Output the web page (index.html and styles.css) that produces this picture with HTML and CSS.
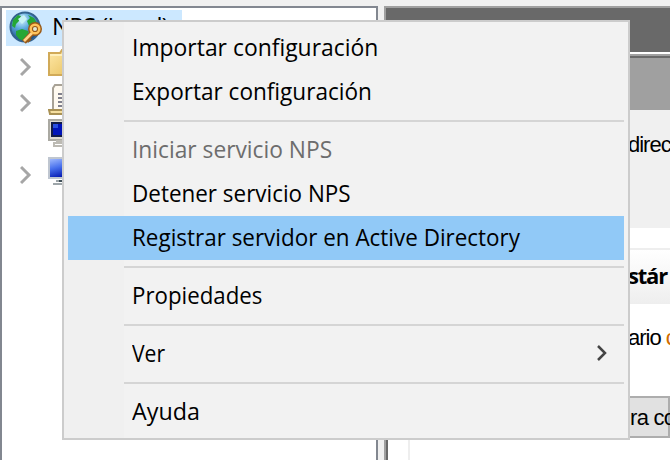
FILE: index.html
```html
<!DOCTYPE html>
<html lang="es">
<head>
<meta charset="utf-8">
<title>NPS</title>
<link rel="stylesheet" href="styles.css">
</head>
<body>
<main class="window">
  <aside class="tree">
    <div class="row selected">
      <svg class="globe" width="34" height="34" viewBox="0 0 34 34">
        <defs><radialGradient id="sea" cx=".38" cy=".25" r=".8"><stop offset="0" stop-color="#d9f5ff"/><stop offset=".4" stop-color="#5aa8dc"/><stop offset="1" stop-color="#164078"/></radialGradient></defs>
        <circle cx="16" cy="16" r="14.5" fill="url(#sea)" stroke="#33628f" stroke-width="2"/>
        <path d="M3 15L4 9l5-5 3 1-2 5-3 3-1 4zM19 4l6 3 4 7-2 3-4-3-3 1-2-5 3-3zM7 20l6-2 6 2 1 4-5 6-5-2-3-4z" fill="#25a735"/>
        <path d="M9 8l6-4 3 4-5 5z" fill="#c8f2f4"/>
        <path d="M15 31L24 21M18 27l3 3" stroke="#9a5a18" stroke-width="5"/>
        <circle cx="26" cy="18" r="4.5" fill="#dfe9d8" stroke="#9a5a18" stroke-width="5"/>
        <path d="M15 30L24 21" stroke="#ffd38b" stroke-width="2.6"/>
        <circle cx="26" cy="18" r="4.3" fill="none" stroke="#ffc35b" stroke-width="2.4"/>
      </svg>
      <span class="tree-label">NPS (Local)</span>
    </div>
    <div class="row">
      <svg class="chevron" width="12" height="20" viewBox="0 0 12 20"><path d="M1 2l8 8-8 8"/></svg>
      <svg width="32" height="32" viewBox="0 0 32 32"><defs><linearGradient id="fold" x2="1" y2="1"><stop stop-color="#ffe9a8"/><stop offset="1" stop-color="#e5bd58"/></linearGradient></defs><path d="M1 6V5h11l2-3h16v25H1z" fill="url(#fold)" stroke="#d1aa58" stroke-width="2"/><path d="M2 7h12" stroke="#fff0bd" stroke-width="2"/></svg>
    </div>
    <div class="row">
      <svg class="chevron" width="12" height="20" viewBox="0 0 12 20"><path d="M1 2l8 8-8 8"/></svg>
      <svg width="32" height="32" viewBox="0 0 32 32"><path d="M5 26V4l2-3h20v25z" fill="#fffaf0" stroke="#a8a296" stroke-width="2"/><path d="M1 26h25v4H2z" fill="#f5dfa0" stroke="#a99154" stroke-width="2"/><path d="M10 10h9M10 14h9M10 18h9M10 22h9" stroke="#80808c" stroke-width="2"/></svg>
    </div>
    <div class="row computer">
      <span class="chevron"></span>
      <svg width="32" height="32" viewBox="0 0 32 32"><path d="M1 3h29v20H1z" fill="#dedbd2" stroke="#aaa9a2" stroke-width="2"/><path d="M4 6h23v13H4z" fill="#0013b8" stroke="#111b48" stroke-width="2"/><path d="M5 7h5v4H5z" fill="#294ee0"/><path d="M8 24h15v2H6v3h20" fill="none" stroke="#bcbab3" stroke-width="2"/></svg>
    </div>
    <div class="row">
      <svg class="chevron" width="12" height="20" viewBox="0 0 12 20"><path d="M1 2l8 8-8 8"/></svg>
      <svg width="32" height="32" viewBox="0 0 32 32"><defs><linearGradient id="screen" x2=".4" y2="1"><stop stop-color="#a9c1ff"/><stop offset=".5" stop-color="#4870ed"/><stop offset="1" stop-color="#0013ad"/></linearGradient></defs><path d="M1 2h29v20H1z" fill="url(#screen)" stroke="#bfc6d0" stroke-width="2"/><path d="M8 25h10M5 28h20" stroke="#9da5a9" stroke-width="2"/><path d="M11 24h9v2h-9z" fill="#405058"/></svg>
    </div>
  </aside>
  <section class="details">
    <div class="title-band"></div>
    <div class="sub-band"></div>
    <div class="intro"><span class="snip direc">direc</span></div>
    <div class="card">
      <div class="card-head"><span class="snip stan">stár</span></div>
      <div class="card-body"><span class="snip ario">ario <span class="orange">c</span></span></div>
      <div class="button"><span class="snip">ra co</span></div>
    </div>
  </section>
</main>
<nav class="menu">
  <div class="item"><span class="t1">Importar configuración</span></div>
  <div class="item"><span class="t2">Exportar configuración</span></div>
  <hr>
  <div class="item disabled"><span class="t3">Iniciar servicio NPS</span></div>
  <div class="item"><span class="t4">Detener servicio NPS</span></div>
  <div class="item active"><span class="t5">Registrar servidor en Active Directory</span></div>
  <hr>
  <div class="item"><span class="t6">Propiedades</span></div>
  <hr>
  <div class="item"><span class="t7">Ver</span><svg class="arrow" width="12" height="16" viewBox="0 0 12 16"><path d="M2 1l7 7-7 7"/></svg></div>
  <hr>
  <div class="item"><span class="t8">Ayuda</span></div>
</nav>
</body>
</html>
```

FILE: styles.css
```css
* { box-sizing: border-box; }
body { margin: 0; width: 670px; height: 460px; overflow: hidden; background: #f0f0f0; font-family: "Open Sans", "Noto Sans", sans-serif; color: #000; }
.window { display: flex; gap: 6px; height: 470px; padding-top: 6px; }
.tree { width: 378px; flex: none; border: 2px solid #828790; background: #fff; padding: 2px 4px; }
.row { display: flex; align-items: center; height: 36px; padding-left: 14px; }
.row > svg:last-child { margin-left: 16px; }
.row > .chevron { width: 12px; flex: none; margin-top: 6px; }
.row > span.chevron + svg { margin-left: 16px; }
.computer { padding-bottom: 6px; }
.chevron path { fill: none; stroke: #a6a6a6; stroke-width: 3; }
.selected { width: 176px; padding-left: 3px; background: #cce8ff; }
.tree-label { margin-left: 9px; font-size: 24px; line-height: 32px; height: 36px; white-space: nowrap; letter-spacing: -0.7px; }
.details { flex: 1; border: solid #a0a0a0; border-width: 2px 0 0 2px; overflow: hidden; }
.title-band { height: 44px; background: #696969; }
.sub-band { height: 58px; border-top: 2px solid #fff; background: linear-gradient(#a0a0a0 2px, #696969 2px 4px, #a0a0a0 4px); }
.intro { height: 118px; background: #f0f0f0; padding: 20px 0 0 241px; }
.title-band, .sub-band, .intro { border-left: 2px solid #696969; }
.intro { padding-left: 240px; }
.card { height: 240px; border-left: 2px solid #696969; background: linear-gradient(90deg, #fff 20px, #eee 20px 22px, #fff 22px); padding: 20px 0 0 20px; }
.card-head { height: 56px; border-top: 2px solid #eee; background: linear-gradient(#fff, #eee); padding: 10px 0 0 220px; }
.card-body { height: 92px; padding: 19px 0 0 220px; }
.button { height: 42px; border: 2px solid #adadad; background: #e1e1e1; padding: 5px 0 0 220px; }
.snip { display: block; font: 22px/30px "Liberation Sans", sans-serif; white-space: nowrap; letter-spacing: -1px; }
.stan { font-family: "Open Sans", sans-serif; font-weight: 700; letter-spacing: -1.2px; }
.button .snip { letter-spacing: -0.7px; }
.orange { color: #d06b00; }
.menu { position: absolute; left: 62px; top: 20px; width: 568px; height: 420px; border: 2px solid #ccc; padding: 4px; background: linear-gradient(90deg, #f0f0f0 60px, #f2f2f2 60px); }
.item { display: flex; align-items: center; justify-content: space-between; height: 44px; padding: 0 16px 0 64px; font-size: 24px; line-height: 44px; white-space: nowrap; }
.item span { margin-top: -2px; transform-origin: left; }
.t1 { transform: scaleX(.954); }
.t2 { transform: scaleX(.94); }
.t3 { transform: scaleX(.948); }
.t4 { transform: scaleX(.935); }
.t5 { transform: scaleX(.935); }
.t6 { transform: scaleX(.928); }
.t7 { transform: scaleX(.88); }
.t8 { transform: scaleX(.97); }
.active { background: #91c9f7; }
.disabled { color: #6d6d6d; }
.arrow { margin-top: -2px; }
.arrow path { fill: none; stroke: #444; stroke-width: 2.5; }
hr { height: 2px; margin: 6px 0 6px 56px; border: 0; background: #d5d5d5; }
```
